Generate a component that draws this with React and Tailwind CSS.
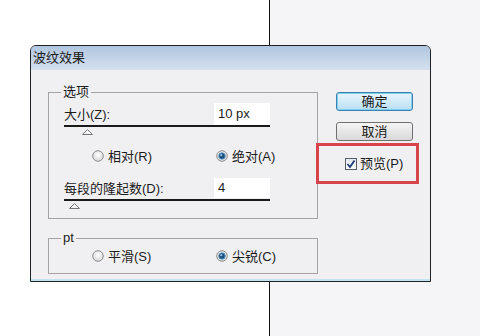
import React from "react";

const font = "font-['Liberation_Sans','Noto_Sans_CJK_SC',sans-serif]";

function Radio({ checked }) {
  return (
    <svg width="12" height="12" viewBox="0 0 12 12" className="shrink-0">
      <defs>
        <radialGradient id={checked ? "rg1" : "rg0"} cx="50%" cy="40%" r="60%">
          <stop offset="0%" stopColor="#ffffff" />
          <stop offset="100%" stopColor="#d6d6d6" />
        </radialGradient>
      </defs>
      <circle cx="6" cy="6" r="5.3" fill={`url(#${checked ? "rg1" : "rg0"})`} stroke="#8e8f8f" strokeWidth="1" />
      {checked && <circle cx="6" cy="6" r="3.3" fill="#1b4f7c" stroke="#6aa3cf" strokeWidth="0.8" />}
      {checked && <circle cx="5.3" cy="5.2" r="1.1" fill="#8fc1e6" />}
    </svg>
  );
}

function Thumb() {
  return (
    <svg width="11" height="6" viewBox="0 0 11 6">
      <path d="M5.5 0.5 L10.5 5.5 L0.5 5.5 Z" fill="#f4f4f4" stroke="#777" strokeWidth="1" />
    </svg>
  );
}

function RadioItem({ checked, label }) {
  return (
    <div className="flex items-center gap-[4px] whitespace-nowrap">
      <Radio checked={checked} />
      <span className="text-[13px] leading-none text-[#1c1c1c] whitespace-nowrap">{label}</span>
    </div>
  );
}

export default function App() {
  return (
    <div className={`relative w-[480px] h-[336px] overflow-hidden flex ${font}`}>
      <div className="w-[269px] h-full bg-white" />
      <div className="w-[1px] h-full bg-[#111]" />
      <div className="flex-1 h-full bg-[#f5f4f7]" />

      {/* dialog window */}
      <div className="absolute left-[30px] top-[45px] w-[401px] h-[237px] flex flex-col border border-[#1e2227] rounded-t-[6px] overflow-hidden bg-[#f0eff2]">
        <div className="h-[24px] shrink-0 bg-gradient-to-b from-[#b0c6e0] to-[#d5e0ee] flex items-center pl-[2px] text-[13px] text-[#1a1a1a] whitespace-nowrap">
          波纹效果
        </div>
        <div className="flex-1 flex pl-[17px] pt-[22px] border-b-2 border-[#c4e3f0]">
          {/* left column */}
          <div className="w-[270px] shrink-0 flex flex-col">
            <div className="relative h-[127px] border border-[#a3a3a3]">
              <span className="absolute left-[12px] top-[-8px] px-[2px] bg-[#f0eff2] text-[13px] leading-[14px] text-[#1c1c1c] whitespace-nowrap">
                选项
              </span>
              <div className="pl-[15px] pt-[10px] w-[221px] flex flex-col">
                <div className="flex items-center justify-between h-[22px]">
                  <span className="text-[13px] leading-none text-[#1c1c1c] whitespace-nowrap">大小(Z):</span>
                  <div className="w-[56px] h-[22px] bg-white flex items-center pl-[4px] text-[13px] text-[#1c1c1c] whitespace-nowrap">
                    10 px
                  </div>
                </div>
                <div className="h-[2px] bg-[#1a1a1a]" />
                <div className="mt-[2px] ml-[18px] h-[6px] flex">
                  <Thumb />
                </div>
                <div className="mt-[14px] h-[14px] flex items-center">
                  <div className="ml-[28px] w-[124px] shrink-0">
                    <RadioItem label="相对(R)" />
                  </div>
                  <RadioItem checked label="绝对(A)" />
                </div>
                <div className="mt-[15px] flex items-center justify-between h-[20px]">
                  <span className="text-[13px] leading-none text-[#1c1c1c] whitespace-nowrap">每段的隆起数(D):</span>
                  <div className="w-[56px] h-[20px] bg-white flex items-center pl-[4px] text-[13px] text-[#1c1c1c]">
                    4
                  </div>
                </div>
                <div className="mt-[1px] h-[2px] bg-[#1a1a1a]" />
                <div className="mt-[2px] ml-[5px] h-[6px] flex">
                  <Thumb />
                </div>
              </div>
            </div>

            <div className="relative mt-[19px] h-[36px] border border-[#a3a3a3]">
              <span className="absolute left-[12px] top-[-8px] px-[2px] bg-[#f0eff2] text-[13px] leading-[14px] text-[#1c1c1c]">
                pt
              </span>
              <div className="pl-[43px] pt-[10px] h-[14px] flex items-center box-content">
                <div className="w-[124px] shrink-0">
                  <RadioItem label="平滑(S)" />
                </div>
                <RadioItem checked label="尖锐(C)" />
              </div>
            </div>
          </div>

          {/* right column */}
          <div className="ml-[18px] flex flex-col">
            <button className="w-[77px] h-[19px] rounded-[3px] border border-[#3c7fb1] bg-gradient-to-b from-[#e8f5fc] to-[#b9dff4] shadow-[inset_0_0_0_1px_#7ed0f0] flex items-center justify-center text-[13px] leading-none text-[#1a1a1a]">
              确定
            </button>
            <button className="mt-[11px] w-[77px] h-[19px] rounded-[3px] border border-[#707070] bg-gradient-to-b from-[#f4f4f4] to-[#d9d9d9] flex items-center justify-center text-[13px] leading-none text-[#1a1a1a]">
              取消
            </button>
            <div className="mt-[16px] ml-[9px] flex items-center gap-[3px] whitespace-nowrap">
              <div className="w-[12px] h-[12px] shrink-0 border border-[#555c66] bg-gradient-to-b from-[#e4e9ef] to-[#fbfbfc] flex items-center justify-center">
                <svg width="10" height="10" viewBox="0 0 10 10">
                  <path d="M1.5 5 L4 8 L8.5 1.5" fill="none" stroke="#1f3c78" strokeWidth="1.8" />
                </svg>
              </div>
              <span className="text-[13px] leading-none text-[#1c1c1c]">预览(P)</span>
            </div>
          </div>
        </div>
      </div>

      {/* red annotation box */}
      <div className="absolute left-[316px] top-[143px] w-[103px] h-[41px] border-[3px] border-[#d8434c]" />
    </div>
  );
}
